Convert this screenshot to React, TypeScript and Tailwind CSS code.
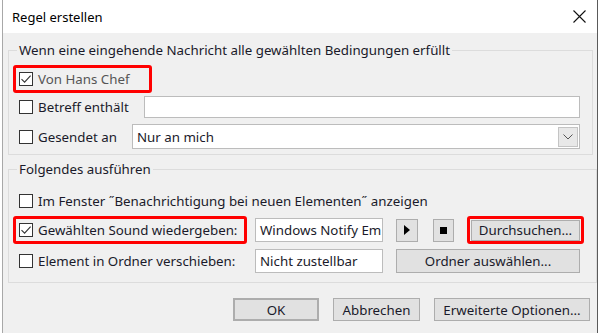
const font = { fontFamily: '"Noto Sans", "Liberation Sans", sans-serif' }

const CheckBox = ({ checked }: { checked?: boolean }) => (
  <span className="flex h-[14px] w-[14px] shrink-0 items-center justify-center border border-[#333333] bg-white">
    {checked && (
      <svg width="12" height="12" viewBox="0 0 12 12">
        <path d="M1.5 6.2 L4.6 9.2 L10.6 2.6" fill="none" stroke="#333333" strokeWidth="1.1" />
      </svg>
    )}
  </span>
)

const Check = ({ label, checked, red, w, muted }: { label: string; checked?: boolean; red?: boolean; w?: string; muted?: boolean }) => (
  <div className={`flex h-[28px] shrink-0 items-center rounded-[3px] border-[3px] pl-[3px] pr-1 ${red ? "border-[#ff0000]" : "border-transparent"} ${w ?? ""}`}>
    <CheckBox checked={checked} />
    <span className={`ml-[5px] whitespace-nowrap ${muted ? "text-[#555555]" : "text-[#1a1a2a]"}`}>{label}</span>
  </div>
)

const Btn = ({ children, className }: { children: React.ReactNode; className?: string }) => (
  <div className={`flex items-center justify-center border border-[#adadad] bg-[#e1e1e1] text-[#1a1a2a] ${className ?? ""}`}>{children}</div>
)

const App = () => {
  return (
    <div className="h-[333px] w-[600px] overflow-hidden bg-white text-[13.3px] leading-[16px]" style={font}>
      <div className="ml-[2px] flex h-[333px] w-[596px] flex-col border-l border-r border-l-[#a8a8a8] border-r-[#5a5a5a]">
        {/* title bar */}
        <div className="flex h-[33px] shrink-0 items-center justify-between bg-white pl-[9px] pr-[11px]">
          <span className="text-[13px] text-black">Regel erstellen</span>
          <svg width="13" height="13" viewBox="0 0 13 13">
            <path d="M0.5 0.5 L12.5 12.5 M12.5 0.5 L0.5 12.5" stroke="#111" strokeWidth="1.1" />
          </svg>
        </div>

        <div className="flex flex-1 flex-col bg-[#f0f0f0] pt-[9px]">
          {/* group 1 */}
          <fieldset className="ml-[5px] w-[585px] border border-[#dcdcdc] pb-[5px] pl-[4px] pr-[12px] pt-[7px]">
            <legend className="ml-[4px] px-[2px] text-[#1a1a2a]">Wenn eine eingehende Nachricht alle gewählten Bedingungen erfüllt</legend>
            <div className="flex">
              <Check label="Von Hans Chef" checked red muted w="w-[139px]" />
            </div>
            <div className="mt-[3px] flex h-[22px] items-center">
              <Check label="Betreff enthält" />
              <div className="ml-auto h-[22px] w-[436px] border border-[#bcbcbc] bg-white" />
            </div>
            <div className="mt-[6px] flex h-[25px] items-center">
              <Check label="Gesendet an" />
              <div className="ml-auto flex h-[25px] w-[448px] items-center border border-[#bcbcbc] bg-white pl-[4px] pr-[1px]">
                <span className="text-[#1a1a2a]">Nur an mich</span>
                <div className="ml-auto flex h-[20px] w-[20px] items-center justify-center border border-[#c4c4c4] bg-[#e8e8e8]">
                  <svg width="10" height="6" viewBox="0 0 10 6">
                    <path d="M0.5 0.5 L5 5 L9.5 0.5" fill="none" stroke="#555" strokeWidth="1" />
                  </svg>
                </div>
              </div>
            </div>
          </fieldset>

          {/* group 2 */}
          <fieldset className="ml-[5px] mt-[6px] w-[585px] border border-[#dcdcdc] pb-[9px] pl-[4px] pr-[12px] pt-[10px]">
            <legend className="ml-[4px] px-[2px] text-[#1a1a2a]">Folgendes ausführen</legend>
            <div className="flex">
              <Check label={"Im Fenster ˝Benachrichtigung bei neuen Elementen˝ anzeigen"} />
            </div>
            <div className="mt-[1px] flex h-[28px] items-center">
              <Check label="Gewählten Sound wiedergeben:" checked red w="w-[234px]" />
              <div className="ml-[8px] flex h-[24px] w-[128px] items-center overflow-hidden whitespace-nowrap border border-[#bcbcbc] bg-white pl-[4px] text-[#1a1a2a]">
                Windows Notify Em
              </div>
              <Btn className="ml-[13px] h-[23px] w-[22px]">
                <svg width="6" height="10" viewBox="0 0 6 10"><path d="M0 0 L6 5 L0 10 Z" fill="#000" /></svg>
              </Btn>
              <Btn className="ml-[15px] h-[23px] w-[21px]">
                <span className="h-[7px] w-[7px] bg-black" />
              </Btn>
              <div className="ml-[13px] flex h-[28px] w-[117px] items-center rounded-[3px] border-[3px] border-[#ff0000] pl-[1px]">
                <Btn className="h-[21px] w-[109px]">Durchsuchen...</Btn>
              </div>
            </div>
            <div className="mt-[5px] flex h-[24px] items-center">
              <Check label="Element in Ordner verschieben:" w="w-[234px]" />
              <div className="ml-[8px] flex h-[24px] w-[128px] items-center border border-[#bcbcbc] bg-white pl-[4px] text-[#1a1a2a]">
                Nicht zustellbar
              </div>
              <Btn className="ml-[13px] h-[24px] w-[184px]">Ordner auswählen...</Btn>
            </div>
          </fieldset>

          {/* dialog buttons */}
          <div className="mt-[15px] flex pl-[230px]">
            <Btn className="h-[23px] w-[86px] border-2 border-[#0078d7]">OK</Btn>
            <Btn className="ml-[14px] h-[23px] w-[87px]">Abbrechen</Btn>
            <Btn className="ml-[14px] h-[23px] w-[156px]">Erweiterte Optionen...</Btn>
          </div>
        </div>
      </div>
    </div>
  )
}

export default App
